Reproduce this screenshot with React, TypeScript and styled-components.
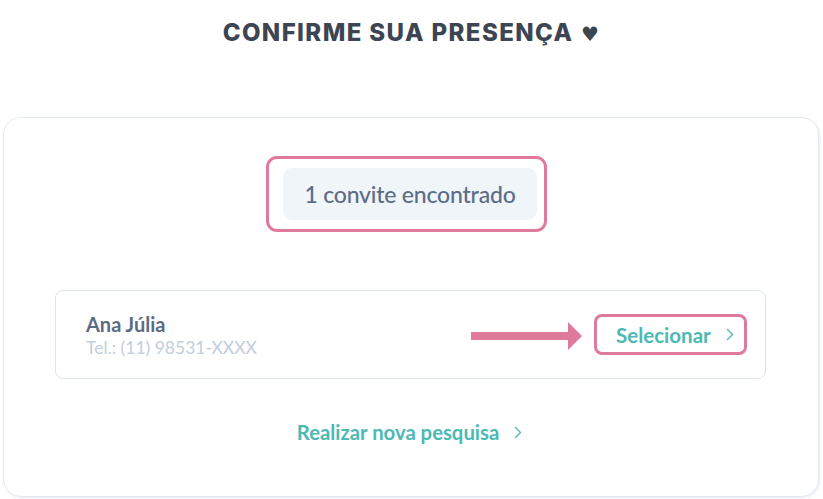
import React from "react";
import styled, { createGlobalStyle } from "styled-components";

const Global = createGlobalStyle`
  html, body { margin: 0; padding: 0; background: #ffffff; }
  body { font-family: Lato, "Open Sans", sans-serif; }
  * { box-sizing: border-box; }
`;

const Page = styled.div`
  width: 823px;
  height: 499px;
  display: flex;
  flex-direction: column;
  overflow: hidden;
`;

const Title = styled.h1`
  margin: 0;
  padding-top: 18px;
  height: 117px;
  text-align: center;
  font-family: Inter, "Noto Sans", sans-serif;
  font-weight: 800;
  font-size: 24px;
  letter-spacing: 1.4px;
  color: #3c4551;
  line-height: 30px;
`;

const Heart = styled.span`
  font-family: "DejaVu Sans", sans-serif;
  font-size: 20px;
  margin-left: 1px;
`;

const Card = styled.section`
  margin: 0 4px 0 3px;
  height: 380px;
  border: 1px solid #e3e9f1;
  border-radius: 18px;
  box-shadow: 1px 1px 3px rgba(180, 195, 215, 0.35);
  padding: 38px 52px 0 51px;
  display: flex;
  flex-direction: column;
  align-items: center;
`;

const Highlight = styled.div<{ $pad: string; $radius: number }>`
  border: 3px solid #e07a9a;
  border-radius: ${(p) => p.$radius}px;
  padding: ${(p) => p.$pad};
  display: flex;
`;

const TopHighlight = styled(Highlight)`
  margin-right: 8px;
`;

const Badge = styled.div`
  width: 254px;
  height: 52px;
  background: #f0f5fa;
  border-radius: 9px;
  display: flex;
  align-items: center;
  justify-content: center;
  font-size: 23px;
  font-weight: 500;
  color: #5b6c85;
  letter-spacing: -0.2px;
`;

const Guest = styled.div`
  margin-top: 58px;
  align-self: stretch;
  height: 89px;
  border: 1px solid #dde4ee;
  border-radius: 8px;
  display: flex;
  align-items: center;
  padding: 0 18px 0 30px;
`;

const Info = styled.div`
  flex: 1;
  display: flex;
  flex-direction: column;
  gap: 1px;
  margin-top: 1px;
`;

const Name = styled.div`
  font-size: 20px;
  font-weight: 700;
  color: #5b6b83;
  line-height: 24px;
`;

const Phone = styled.div`
  font-size: 17.5px;
  color: #c3cddb;
  line-height: 22px;
`;

const Arrow = styled.svg`
  width: 111px;
  height: 28px;
  margin-right: 12px;
  margin-top: 3px;
`;

const LinkText = styled.span<{ $size: number }>`
  display: inline-flex;
  align-items: center;
  gap: 15px;
  color: #4cb9b4;
  font-weight: 700;
  font-size: ${(p) => p.$size}px;
`;

const Chevron = styled.svg`
  width: 8px;
  height: 13px;
`;

const SelectBox = styled(Highlight)`
  width: 153px;
  height: 41px;
  align-items: center;
  padding: 0 0 0 19px;
`;

const Footer = styled.div`
  margin-top: 41px;
  margin-right: 2px;
`;

const Chev = () => (
  <Chevron viewBox="0 0 8 13">
    <path d="M1.5 1.5 L6.5 6.5 L1.5 11.5" fill="none" stroke="#4cb9b4" strokeWidth="1.4" strokeLinecap="round" strokeLinejoin="round" />
  </Chevron>
);

export default function App() {
  return (
    <Page>
      <Global />
      <Title>
        CONFIRME SUA PRESENÇA <Heart>♥</Heart>
      </Title>
      <Card>
        <TopHighlight $pad="9px 7px 9px 14px" $radius={11}>
          <Badge>1 convite encontrado</Badge>
        </TopHighlight>
        <Guest>
          <Info>
            <Name>Ana Júlia</Name>
            <Phone>Tel.: (11) 98531-XXXX</Phone>
          </Info>
          <Arrow viewBox="0 0 111 28">
            <polygon points="0,10 97,10 97,0 111,14 97,28 97,18 0,18" fill="#e07a9a" />
          </Arrow>
          <SelectBox $pad="0" $radius={8}>
            <LinkText $size={20.5}>
              Selecionar
              <Chev />
            </LinkText>
          </SelectBox>
        </Guest>
        <Footer>
          <LinkText $size={20.3}>
            Realizar nova pesquisa
            <Chev />
          </LinkText>
        </Footer>
      </Card>
    </Page>
  );
}
